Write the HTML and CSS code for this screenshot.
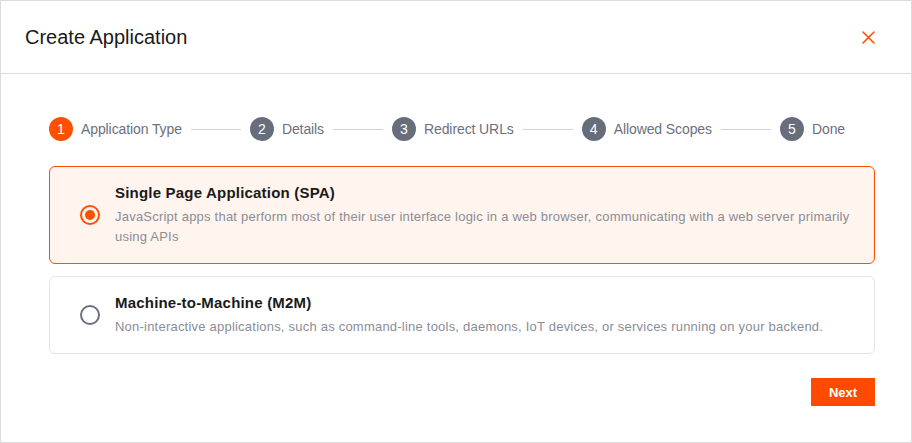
FILE: index.html
```html
<!DOCTYPE html>
<html lang="en">
<head>
    <meta charset="UTF-8">
    <meta name="viewport" content="width=device-width, initial-scale=1.0">
    <title>Create Application</title>
    <link rel="stylesheet" href="styles.css">
</head>
<body>
    <div class="modal">
        <div class="modal-header">
            <h1 class="modal-title">Create Application</h1>
            <button class="close-btn" aria-label="Close">
                <svg width="13" height="13" viewBox="0 0 13 13">
                    <path d="M1 1L12 12M12 1L1 12" stroke="#ff4f00" stroke-width="1.6" stroke-linecap="round"/>
                </svg>
            </button>
        </div>

        <div class="modal-body">
            <!-- Stepper -->
            <div class="stepper">
                <div class="step active"><span class="step-num">1</span><span class="step-label">Application Type</span></div>
                <span class="step-line"></span>
                <div class="step"><span class="step-num">2</span><span class="step-label">Details</span></div>
                <span class="step-line"></span>
                <div class="step"><span class="step-num">3</span><span class="step-label">Redirect URLs</span></div>
                <span class="step-line"></span>
                <div class="step"><span class="step-num">4</span><span class="step-label">Allowed Scopes</span></div>
                <span class="step-line"></span>
                <div class="step"><span class="step-num">5</span><span class="step-label">Done</span></div>
            </div>

            <!-- Application type options -->
            <div class="options">
                <label class="option selected">
                    <span class="radio"></span>
                    <span class="option-text">
                        <span class="option-title">Single Page Application (SPA)</span>
                        <span class="option-desc">JavaScript apps that perform most of their user interface logic in a web browser, communicating with a web server primarily using APIs</span>
                    </span>
                </label>
                <label class="option">
                    <span class="radio"></span>
                    <span class="option-text">
                        <span class="option-title">Machine-to-Machine (M2M)</span>
                        <span class="option-desc">Non-interactive applications, such as command-line tools, daemons, IoT devices, or services running on your backend.</span>
                    </span>
                </label>
            </div>

            <div class="actions">
                <button class="next-btn">Next</button>
            </div>
        </div>
    </div>
</body>
</html>
```

FILE: styles.css
```css
* {
    margin: 0;
    padding: 0;
    box-sizing: border-box;
}

body {
    font-family: 'Liberation Sans', Arial, sans-serif;
    background: #ffffff;
    color: #1f2328;
}

.modal {
    width: 912px;
    height: 443px;
    border: 1px solid #dcdcdc;
    background: #ffffff;
}

.modal-header {
    height: 73px;
    border-bottom: 1px solid #dcdcdc;
    display: flex;
    align-items: center;
    justify-content: space-between;
    padding: 0 36px 0 24px;
}

.modal-title {
    font-size: 20px;
    font-weight: normal;
    color: #1a1a1a;
}

.close-btn {
    background: none;
    border: none;
    width: 13px;
    height: 13px;
    cursor: pointer;
    display: flex;
}

.modal-body {
    padding: 43px 36px 0 48px;
}

.stepper {
    display: flex;
    align-items: center;
    height: 24px;
}

.step {
    display: flex;
    align-items: center;
    gap: 8px;
}

.step-num {
    width: 24px;
    height: 24px;
    border-radius: 50%;
    background: #686d7c;
    color: #ffffff;
    font-size: 14px;
    display: flex;
    align-items: center;
    justify-content: center;
}

.step.active .step-num {
    background: #ff4f00;
}

.step-label {
    font-size: 14px;
    color: #6b7080;
    letter-spacing: -0.1px;
}

.step-line {
    width: 50px;
    height: 1px;
    background: #cfd3da;
    margin: 0 9px;
}

.options {
    margin-top: 25px;
    display: flex;
    flex-direction: column;
    gap: 12px;
}

.option {
    display: flex;
    align-items: center;
    gap: 15px;
    padding: 16px 16px 16px 30px;
    border: 1px solid #e2e4e8;
    border-radius: 6px;
    cursor: pointer;
}

.option.selected {
    border-color: #ff4f00;
    background: #fff4ee;
}

.radio {
    flex: none;
    width: 20px;
    height: 20px;
    border: 2px solid #6b7080;
    border-radius: 50%;
    display: flex;
    align-items: center;
    justify-content: center;
}

.option.selected .radio {
    border-color: #ff4f00;
}

.option.selected .radio::after {
    content: "";
    width: 10px;
    height: 10px;
    border-radius: 50%;
    background: #ff4f00;
}

.option-text {
    display: flex;
    flex-direction: column;
}

.option-title {
    font-size: 15px;
    line-height: 20px;
    font-weight: bold;
    color: #1a1a1a;
    letter-spacing: 0.2px;
}

.option-desc {
    margin-top: 4px;
    font-size: 13px;
    line-height: 20px;
    color: #8a8d96;
    letter-spacing: 0.22px;
}

.actions {
    display: flex;
    justify-content: flex-end;
    margin-top: 24px;
}

.next-btn {
    width: 64px;
    height: 28px;
    background: #ff4a00;
    border: none;
    color: #ffffff;
    font-family: inherit;
    font-size: 13px;
    font-weight: bold;
    cursor: pointer;
}
```
